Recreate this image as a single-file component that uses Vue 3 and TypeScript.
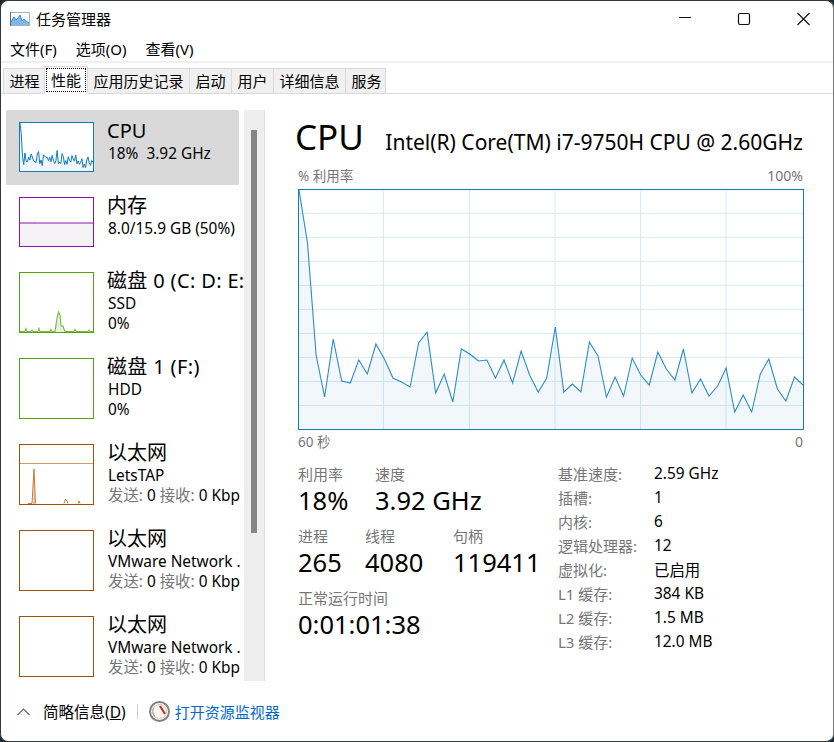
<script setup lang="ts">
type Perf = {
    title: string;
    lines?: string[];
    net?: string;
    kind: 'cpu' | 'mem' | 'disk' | 'idle-disk' | 'eth' | 'idle-eth';
    selected?: boolean;
};

const sidebar: Perf[] = [
    { title: 'CPU', lines: ['18%\u00a0 3.92 GHz'], kind: 'cpu', selected: true },
    { title: '内存', lines: ['8.0/15.9 GB (50%)'], kind: 'mem' },
    { title: '磁盘 0 (C: D: E:', lines: ['SSD', '0%'], kind: 'disk' },
    { title: '磁盘 1 (F:)', lines: ['HDD', '0%'], kind: 'idle-disk' },
    { title: '以太网', lines: ['LetsTAP'], net: '0 Kbp', kind: 'eth' },
    { title: '以太网', lines: ['VMware Network .'], net: '0 Kbp', kind: 'idle-eth' },
    { title: '以太网', lines: ['VMware Network .'], net: '0 Kbp', kind: 'idle-eth' },
];

const tabs = ['进程', '性能', '应用历史记录', '启动', '用户', '详细信息', '服务'];
const menus = ['文件(F)', '选项(O)', '查看(V)'];

// traced from the graph, 0 = top of the plot and 239 = bottom
const cpuHistory = [
    0, 53, 165, 207, 149, 191, 193, 170, 184, 154, 169, 188, 192, 197, 153, 142, 203, 184, 212, 159,
    164, 171, 170, 188, 170, 193, 161, 185, 202, 188, 137, 202, 194, 202, 152, 166, 207, 187, 206, 168,
    185, 195, 162, 179, 190, 159, 203, 189, 206, 196, 178, 222, 205, 222, 184, 169, 199, 211, 187, 195,
];

const cpuLine = cpuHistory.map((y, i) => `${((i * 504) / 59).toFixed(1)},${y}`).join(' ');
const cpuArea = `0,239 ${cpuLine} 504,239`;

const horizontalGrid = [24, 48, 72, 96, 120, 144, 168, 192, 216];
const verticalGrid = [84.5, 170.5, 256, 341.5, 427];

const details = [
    ['基准速度:', '2.59 GHz'],
    ['插槽:', '1'],
    ['内核:', '6'],
    ['逻辑处理器:', '12'],
    ['虚拟化:', '已启用'],
    ['L1 缓存:', '384 KB'],
    ['L2 缓存:', '1.5 MB'],
    ['L3 缓存:', '12.0 MB'],
];
</script>

<template>
    <div class="window">
        <header class="titlebar">
            <svg class="app-icon" width="20" height="14" viewBox="0 0 20 14">
                <rect x="0.5" y="0.5" width="19" height="13" fill="#fff" stroke="#a9b4bd" />
                <path d="M1 13V10L4 5 6 8 8 6 10 3 12 9 14 7 16 9 19 11V13Z" fill="#7db8ec" />
                <path d="M1 10L4 5 6 8 8 6 10 3 12 9 14 7 16 9 19 11" fill="none" stroke="#3f8fd8" />
                <path d="M0.5 0V14" stroke="#5b6b78" />
            </svg>
            <span class="app-title">任务管理器</span>
            <div class="controls">
                <svg width="58" height="14" viewBox="0 0 58 14">
                    <path d="M22 5.5H34" stroke="#111" />
                </svg>
                <svg width="58" height="14" viewBox="0 0 58 14">
                    <rect x="23.5" y="1.5" width="11" height="11" rx="1.5" fill="none" stroke="#111" stroke-width="1.2" />
                </svg>
                <svg width="58" height="14" viewBox="0 0 58 14">
                    <path d="M24.5 1L36.5 13M36.5 1L24.5 13" stroke="#111" stroke-width="1.1" />
                </svg>
            </div>
        </header>

        <nav class="menubar">
            <span v-for="m in menus" :key="m" class="menu-item">{{ m }}</span>
        </nav>

        <div class="tabs">
            <div v-for="t in tabs" :key="t" class="tab" :class="{ active: t === '性能' }">
                <span class="tab-label">{{ t }}</span>
            </div>
        </div>

        <main class="content">
            <aside class="sidebar">
                <div class="perf-list">
                    <div
                        v-for="(item, i) in sidebar"
                        :key="i"
                        class="perf-item"
                        :class="[item.kind, { selected: item.selected }]"
                    >
                        <div class="thumb">
                            <svg
                                v-if="item.kind === 'cpu'"
                                viewBox="0 0 504 239"
                                preserveAspectRatio="none"
                            >
                                <polygon :points="cpuArea" fill="#f1f6fa" />
                                <polyline
                                    :points="cpuLine"
                                    fill="none"
                                    stroke="#117dbb"
                                    stroke-width="1"
                                    vector-effect="non-scaling-stroke"
                                />
                            </svg>
                            <svg v-else-if="item.kind === 'mem'" viewBox="0 0 73 47">
                                <rect x="0" y="24.5" width="73" height="23" fill="#f4f2f4" />
                                <path d="M0 24.5H73" stroke="#8b12ae" />
                                <path d="M15 24V23" stroke="#c58fd6" />
                            </svg>
                            <svg v-else-if="item.kind === 'disk'" viewBox="0 0 73 59">
                                <path
                                    d="M35 59L37 45 38.5 39 40 42 41 53 43 53 44 56 45 59Z"
                                    fill="#e6f2dc"
                                />
                                <path
                                    d="M0 58.5H5L6 55.5 7 58.5H11L12 57 13 58.5H18L19 55.5 20 58.5H30L31 56.5 32 58.5H35L37 45 38.5 39 40 42 41 53 43 53 44 56 45 58.5H54L55 56.5 56 58.5H68L69 57 70 58.5H73"
                                    fill="none"
                                    stroke="#7ab848"
                                    stroke-width="1.1"
                                />
                            </svg>
                            <svg v-else-if="item.kind === 'eth'" viewBox="0 0 73 59">
                                <path d="M0 18.5H73" stroke="#d29a68" />
                                <path d="M13 59L14 24 15 59Z" fill="#e9c4a3" />
                                <path
                                    d="M8 58.5H12L14 24 15.5 58.5M44 58.5L45.5 54 47 56 48 58.5M58 58.5L59 56 60 58.5"
                                    fill="none"
                                    stroke="#c27a3f"
                                />
                            </svg>
                        </div>
                        <div class="perf-text">
                            <div class="perf-title">{{ item.title }}</div>
                            <div v-for="line in item.lines" :key="line" class="perf-line">{{ line }}</div>
                            <div v-if="item.net" class="perf-line">
                                <span class="muted">发送:</span> 0 <span class="muted">接收:</span> {{ item.net }}
                            </div>
                        </div>
                    </div>
                </div>
                <div class="scrollbar">
                    <div class="scroll-thumb"></div>
                </div>
            </aside>

            <section class="panel">
                <div class="panel-head">
                    <h1>CPU</h1>
                    <span class="cpu-name">Intel(R) Core(TM) i7-9750H CPU @ 2.60GHz</span>
                </div>
                <div class="axis axis-top">
                    <span>% 利用率</span>
                    <span class="axis-end">100%</span>
                </div>
                <div class="graph">
                    <svg width="504" height="239" viewBox="0 0 504 239">
                        <path
                            v-for="y in horizontalGrid"
                            :key="'h' + y"
                            :d="`M0 ${y - 0.5}H504`"
                            stroke="#d9eaf4"
                        />
                        <path
                            v-for="x in verticalGrid"
                            :key="'v' + x"
                            :d="`M${x} 0V239`"
                            stroke="#d9eaf4"
                        />
                        <polygon :points="cpuArea" fill="#117dbb" fill-opacity="0.06" />
                        <polyline :points="cpuLine" fill="none" stroke="#2d8cc4" stroke-width="1.1" />
                    </svg>
                </div>
                <div class="axis axis-bottom">
                    <span>60 秒</span>
                    <span class="axis-end">0</span>
                </div>

                <div class="stats">
                    <div class="stats-left">
                        <div class="stat-row speed">
                            <div class="stat"><label>利用率</label><b>18%</b></div>
                            <div class="stat"><label>速度</label><b>3.92 GHz</b></div>
                        </div>
                        <div class="stat-row counts">
                            <div class="stat"><label>进程</label><b>265</b></div>
                            <div class="stat"><label>线程</label><b>4080</b></div>
                            <div class="stat"><label>句柄</label><b>119411</b></div>
                        </div>
                        <div class="stat-row">
                            <div class="stat"><label>正常运行时间</label><b>0:01:01:38</b></div>
                        </div>
                    </div>
                    <dl class="stats-right">
                        <template v-for="row in details" :key="row[0]">
                            <dt>{{ row[0] }}</dt>
                            <dd>{{ row[1] }}</dd>
                        </template>
                    </dl>
                </div>
            </section>
        </main>

        <footer class="footer">
            <svg class="chevron" width="13" height="8" viewBox="0 0 13 8">
                <path d="M0.5 7L6.5 1 12.5 7" fill="none" stroke="#666" stroke-width="1.1" />
            </svg>
            <span class="fewer">简略信息(<u>D</u>)</span>
            <span class="divider"></span>
            <svg class="monitor" width="21" height="21" viewBox="0 0 21 21">
                <circle cx="10.5" cy="10.5" r="9.5" fill="#fff" stroke="#85817c" stroke-width="2" />
                <circle cx="10.5" cy="10.5" r="7" fill="#f8f6f2" stroke="#cfcac2" />
                <path d="M5 6.5A7 7 0 0 0 6 15.5" fill="none" stroke="#b7ad9f" stroke-width="1.4" />
                <path d="M11 5L16 13" stroke="#cf2a1d" stroke-width="2" />
            </svg>
            <span class="link">打开资源监视器</span>
        </footer>
    </div>
</template>

<style>
    html,
    body {
        margin: 0;
        background: #1c2a36;
    }
</style>

<style scoped>
    .window {
        --ui: 'Noto Sans', 'Noto Sans CJK SC', sans-serif;
        box-sizing: border-box;
        display: flex;
        flex-direction: column;
        width: 834px;
        height: 742px;
        overflow: hidden;
        border: 1px solid #33383d;
        border-right-color: #777;
        border-radius: 8px;
        background: #fff;
        color: #000;
        font-family: var(--ui);
        font-size: 14px;
    }

    .titlebar {
        display: flex;
        align-items: center;
        flex: none;
        box-sizing: border-box;
        height: 37px;
        padding: 0 2px 2px 9px;
    }

    .app-title {
        margin-left: 6px;
        font-size: 15px;
    }

    .controls {
        display: flex;
        margin-left: auto;
    }

    .controls svg {
        display: block;
    }

    .menubar {
        display: flex;
        flex: none;
        align-items: center;
        gap: 19px;
        box-sizing: border-box;
        height: 24px;
        padding: 0 0 2px 9px;
        border-bottom: 1px solid #f0f0f0;
        font-size: 15px;
    }

    .tabs {
        display: flex;
        flex: none;
        align-items: flex-end;
        height: 32px;
        box-sizing: border-box;
        padding-left: 2px;
        border-top: 1px solid #f0f0f0;
        border-bottom: 1px solid #d9d9d9;
        font-size: 15px;
    }

    .tab {
        position: relative;
        top: 1px;
        box-sizing: border-box;
        height: 26px;
        margin-right: -1px;
        padding: 0 5.5px;
        border: 1px solid #d9d9d9;
        background: #f0f0f0;
        line-height: 24px;
        white-space: nowrap;
    }

    .tab:last-child {
        padding-right: 3px;
    }

    .tab.active {
        z-index: 1;
        height: 28px;
        margin: 0 -1px;
        padding: 1px 1px 0;
        border-bottom-color: #fff;
        background: #fff;
    }

    .tab.active .tab-label {
        display: block;
        height: 22px;
        padding: 0 4px;
        border: 1px dotted #000;
        line-height: 22px;
    }

    .content {
        display: flex;
        flex: 1;
        min-height: 0;
        padding-top: 16px;
    }

    .sidebar {
        display: flex;
        flex: none;
        height: 571px;
        margin-left: 5px;
    }

    .perf-list {
        width: 238px;
        overflow: hidden;
    }

    .perf-item {
        display: flex;
        box-sizing: border-box;
        height: 86px;
        padding: 12px 0 0 13px;
    }

    .perf-item.cpu {
        width: 233px;
        height: 75px;
        border-radius: 2px;
        background: #d9d9d9;
    }

    .perf-item.mem {
        height: 75px;
    }

    .thumb {
        flex: none;
        box-sizing: border-box;
        width: 75px;
        height: 61px;
        border: 1px solid;
        background: #fff;
    }

    .thumb svg {
        display: block;
        width: 100%;
        height: 100%;
    }

    .cpu .thumb,
    .mem .thumb {
        height: 50px;
    }

    .cpu .thumb {
        border-color: #117dbb;
    }

    .mem .thumb {
        border-color: #8b12ae;
    }

    .disk .thumb,
    .idle-disk .thumb {
        border-color: #4da60c;
    }

    .eth .thumb,
    .idle-eth .thumb {
        border-color: #a74f01;
    }

    .perf-text {
        flex: none;
        margin: -3px 0 0 14px;
        white-space: nowrap;
    }

    .perf-title {
        height: 24px;
        margin: 0 0 1px -1px;
        font-size: 20px;
        line-height: 24px;
    }

    .disk .perf-title,
    .idle-disk .perf-title {
        letter-spacing: 0.35px;
    }

    .perf-line {
        height: 20px;
        font-size: 15.4px;
        line-height: 20px;
    }

    .muted {
        color: #767676;
    }

    .scrollbar {
        position: relative;
        flex: none;
        box-sizing: border-box;
        width: 21px;
        border-right: 1px solid #ddd;
        background: #eee;
    }

    .scroll-thumb {
        position: absolute;
        top: 20px;
        left: 7px;
        width: 6px;
        height: 403px;
        background: #858585;
    }

    .panel {
        display: flex;
        flex: 1;
        flex-direction: column;
        min-width: 0;
        padding: 0 30px 0 33px;
    }

    .panel-head {
        display: flex;
        align-items: baseline;
        justify-content: space-between;
        height: 50px;
        margin-left: -3px;
        padding-top: 2px;
    }

    h1 {
        margin: 0;
        font-size: 35px;
        font-weight: 400;
        line-height: 50px;
    }

    .cpu-name {
        font-size: 21px;
        white-space: nowrap;
    }

    .axis {
        display: flex;
        justify-content: space-between;
        height: 20px;
        color: #767676;
        font-size: 13.5px;
        line-height: 20px;
    }

    .axis-end {
        font-size: 14px;
    }

    .axis-top {
        margin-top: 4px;
        margin-bottom: 3px;
    }

    .axis-bottom {
        margin-top: 2px;
    }

    .graph {
        width: 504px;
        height: 239px;
        border: 1px solid #117dbb;
    }

    .graph svg {
        display: block;
    }

    .stats {
        display: flex;
        margin-top: 12px;
    }

    .stats-left {
        display: flex;
        flex: none;
        flex-direction: column;
        gap: 8px;
        width: 260px;
    }

    .stat-row {
        display: grid;
        grid-template-columns: auto;
    }

    .stat-row.speed {
        grid-template-columns: 77px auto;
    }

    .stat-row.counts {
        grid-template-columns: 67px 88px auto;
    }

    .stat label {
        display: block;
        height: 20px;
        color: #767676;
        font-size: 15px;
        line-height: 20px;
    }

    .stat b {
        display: block;
        height: 34px;
        font-size: 25.5px;
        font-weight: 400;
        line-height: 32px;
        white-space: nowrap;
    }

    .stats-right {
        display: grid;
        grid-template-columns: 96px auto;
        grid-auto-rows: 24px;
        align-items: center;
        margin: -3px 0 0;
    }

    dt {
        color: #767676;
        font-size: 15px;
    }

    dd {
        margin: 0;
        font-size: 15.4px;
    }

    .footer {
        display: flex;
        flex: none;
        align-items: center;
        box-sizing: border-box;
        height: 51px;
        padding: 0 0 8px 16px;
        font-size: 15.5px;
    }

    .fewer {
        margin-left: 13px;
    }

    .divider {
        width: 1px;
        height: 15px;
        margin: 0 11px 0 11px;
        background: #d0d0d0;
    }

    .link {
        margin-left: 5px;
        color: #0066cc;
        font-size: 15px;
    }
</style>
